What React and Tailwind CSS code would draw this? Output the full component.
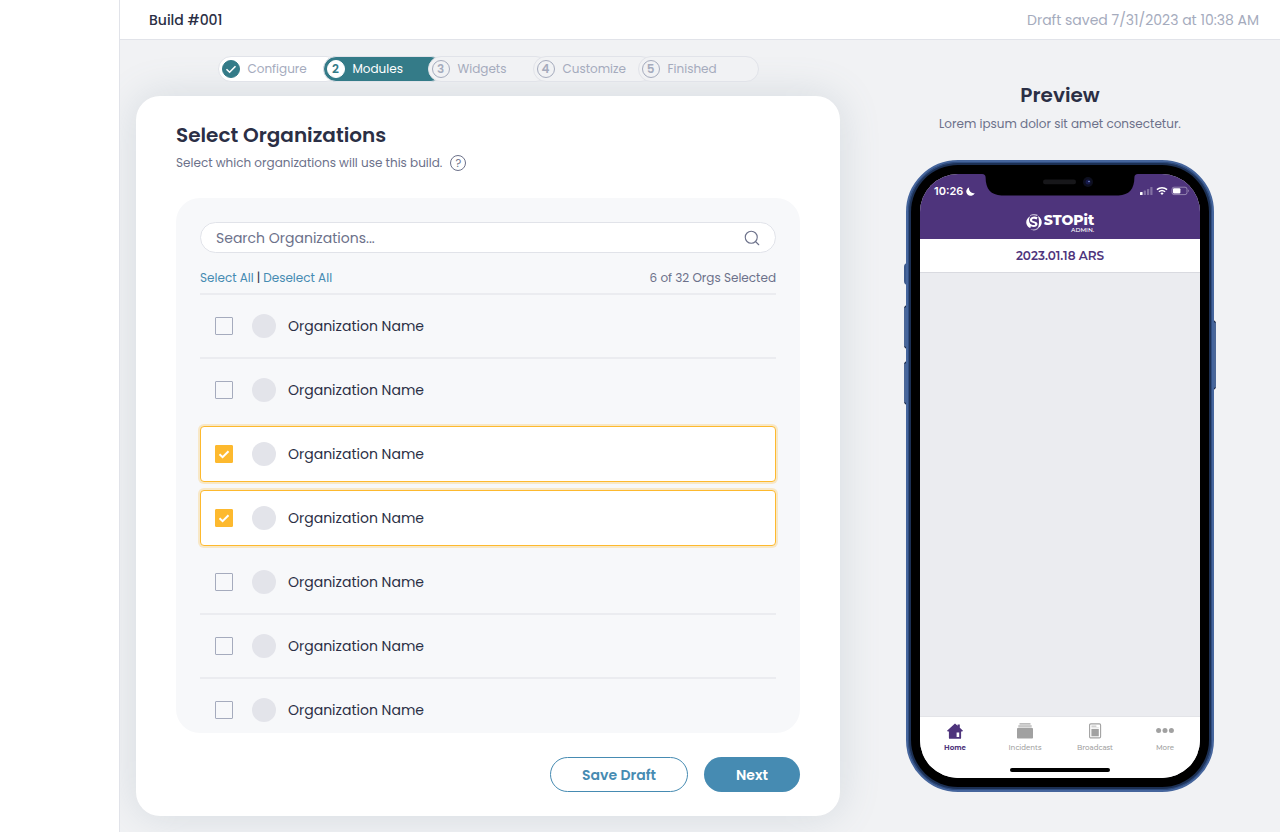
import React, { useState } from 'react';
import { Search } from 'lucide-react';

const steps = [
    { id: 1, label: 'Configure', status: 'done' },
    { id: 2, label: 'Modules', status: 'active' },
    { id: 3, label: 'Widgets', status: 'todo' },
    { id: 4, label: 'Customize', status: 'todo' },
    { id: 5, label: 'Finished', status: 'todo' },
];

const PAGE_SIZE = 7;
const organizations = Array.from({ length: 32 }, (_, i) => ({ id: i + 1, name: 'Organization Name' }));

function CheckMark({ className }) {
    return (
        <svg viewBox="0 0 12 12" fill="none" stroke="currentColor" className={className} aria-hidden="true">
            <path d="M1.5 6.2 4.6 9.2 10.5 3.2" />
        </svg>
    );
}

const stepStyles = {
    done: {
        pill: 'border-[#e1e3e9] bg-white text-[#a5abbd]',
        badge: 'border-[#347b88] bg-[#347b88] text-white',
    },
    active: {
        pill: 'border-[#e1e3e9] bg-[#347b88] text-white',
        badge: 'border-white bg-white text-[#347b88]',
    },
    todo: {
        pill: 'border-[#e1e3e9] bg-[#f1f2f4] text-[#a5abbd]',
        badge: 'border-[#a5abbd] text-[#a5abbd]',
    },
};

function Stepper() {
    return (
        <ol className="flex justify-center pl-4">
            {steps.map((step) => {
                const styles = stepStyles[step.status];
                return (
                    <li
                        key={step.id}
                        className={`relative -ml-4 flex h-[26px] w-[121px] items-center gap-2 rounded-full border pl-[3px] text-xs ${styles.pill}`}
                    >
                        <span className={`flex h-[18px] w-[18px] items-center justify-center rounded-full border text-xs font-semibold ${styles.badge}`}>
                            {step.status === 'done' ? <CheckMark className="h-3 w-3 shrink-0 stroke-[1.6]" /> : step.id}
                        </span>
                        {step.label}
                    </li>
                );
            })}
        </ol>
    );
}

function OrganizationRow({ org, checked, nextChecked, onToggle }) {
    return (
        <li className={`flex h-16 items-center border-b-2 ${checked || nextChecked ? 'border-transparent' : 'border-[#ebecf0]'}`}>
            <label
                className={`flex h-14 w-full items-center rounded border px-3.5 ${
                    checked ? 'border-[#fdb92e] bg-white ring-2 ring-[#fdb92e]/25' : 'border-transparent'
                }`}
            >
                <span className="grid place-items-center">
                    <input
                        type="checkbox"
                        checked={checked}
                        onChange={() => onToggle(org.id)}
                        className="col-start-1 row-start-1 h-[18px] w-[18px] appearance-none rounded-[1px] border border-[#a5abbd] checked:border-[#fdb92e] checked:bg-[#fdb92e]"
                    />
                    {checked && (
                        <CheckMark className="pointer-events-none col-start-1 row-start-1 h-3 w-3 stroke-2 text-white" />
                    )}
                </span>
                <span className="ml-[19px] h-6 w-6 rounded-full bg-[#e3e4ea]" />
                <span className="ml-3 text-sm text-[#2b2f45]">{org.name}</span>
            </label>
        </li>
    );
}

function OrganizationPicker() {
    const [selected, setSelected] = useState([3, 4, 10, 11, 15, 20]);

    const toggle = (id) => {
        setSelected((prev) => (prev.includes(id) ? prev.filter((x) => x !== id) : [...prev, id]));
    };

    return (
        <div className="mt-[26px] flex min-h-0 flex-1 flex-col overflow-hidden rounded-3xl bg-[#f7f8fa] px-6 pt-6">
            <div className="flex h-[31px] shrink-0 items-center rounded-full border border-[#e1e3e9] bg-white pr-3.5 pl-[15px]">
                <input
                    type="text"
                    aria-label="Search Organizations"
                    placeholder="Search Organizations..."
                    className="min-w-0 flex-1 bg-transparent text-sm text-[#2b2f45] outline-none placeholder:text-[#6c718a]"
                />
                <Search className="h-[18px] w-[18px] text-[#6c718a]" strokeWidth={1.5} />
            </div>

            <div className="mt-[15px] flex items-center justify-between border-b-2 border-[#ebecf0] pb-[5px] text-xs leading-5 text-[#6c718a]">
                <div className="flex gap-[3px]">
                    <button type="button" className="text-[#468bb2]" onClick={() => setSelected(organizations.map((o) => o.id))}>
                        Select All
                    </button>
                    <span className="text-[#2b2f45]">|</span>
                    <button type="button" className="text-[#468bb2]" onClick={() => setSelected([])}>
                        Deselect All
                    </button>
                </div>
                <span>
                    {selected.length} of {organizations.length} Orgs Selected
                </span>
            </div>

            <ul className="-mx-1 min-h-0 flex-1 overflow-y-auto px-1 [scrollbar-width:none]">
                {organizations.slice(0, PAGE_SIZE).map((org) => (
                    <OrganizationRow
                        key={org.id}
                        org={org}
                        checked={selected.includes(org.id)}
                        nextChecked={selected.includes(org.id + 1)}
                        onToggle={toggle}
                    />
                ))}
            </ul>
        </div>
    );
}

function StatusIcons() {
    return (
        <svg width="50" height="10" viewBox="0 0 50 10" aria-hidden="true">
            <g fill="#fff">
                <rect x="0" y="6" width="2.6" height="3" rx="0.6" />
                <rect x="3.7" y="4.5" width="2.2" height="4.5" rx="0.6" opacity="0.3" />
                <rect x="7" y="3" width="2.2" height="6" rx="0.6" opacity="0.3" />
                <rect x="10.3" y="1" width="2.2" height="8" rx="0.6" opacity="0.3" />
            </g>
            <g fill="none" stroke="#fff" strokeWidth="1.5">
                <path d="M16.9 3.6a7.8 7.8 0 0 1 10.2 0" />
                <path d="M18.900 5.8a4.800 4.800 0 0 1 6.2 0" />
            </g>
            <path d="M20.400 7.3a2.4 2.4 0 0 1 3.2 0L22 9Z" fill="#fff" />
            <rect x="32" y="1.2" width="15" height="7.4" rx="2" fill="none" stroke="#fff" opacity="0.4" />
            <rect x="33" y="2.2" width="7.4" height="5.4" rx="1" fill="#fff" />
            <path d="M48.2 3.6v2.6c.9-.4.9-2.2 0-2.6Z" fill="#fff" opacity="0.5" />
        </svg>
    );
}

function Swirl() {
    return (
        <svg width="16" height="18" viewBox="0 0 16 18" fill="#fff" aria-hidden="true">
            <path d="M4 2.2C6 .8 9.800.4 12 2L10.8 3.2C9 2.1 6 2 4 3.2Z" opacity="0.6" />
            <path d="M4.200 3.200C.9 4.800-.3 8.200.5 11 1 12.900 2.400 14.400 4.400 15L4.800 13.200C8 14.800 11.400 13.600 11.500 11.200 11.600 9.500 10 8.800 7.900 8.200 6.500 7.800 5.900 7.400 6.100 6.800 6.400 5.700 8.700 5.500 10.500 6.500L11.700 4.400C8.600 2.800 4.700 3.700 4 6.200 3.400 8.600 5.300 9.500 7.500 10.100 8.800 10.500 9.300 10.800 9.100 11.400 8.700 12.400 6 12.300 4.200 10.800 2.600 8.500 2.700 5.600 4.200 3.200Z" />
            <path d="M12 2.900C15.400 5 16.300 8.500 15.400 11.300 14.800 13.200 13.600 14.500 11.600 15.300 13 12.800 13.700 7.600 12 2.900Z" />
            <path d="M4.500 16C6.900 17 10.100 16.300 12 14.200L12.500 15.500C10.400 17.900 6.800 18.200 4.500 16Z" opacity="0.6" />
        </svg>
    );
}

function HomeIcon() {
    return (
        <svg width="16" height="16" viewBox="0 0 16 16" aria-hidden="true">
            <path fill="currentColor" d="M8 .4 10.600 2.800V1.600h2.200v3.200L16 7.700l-.8.900h-1.100v6.300c0 .6-.3.900-.9.900H2.800c-.6 0-.9-.3-.9-.9V8.600H.8L0 7.700Z" />
            <path fill="#fff" d="M9.600 9.600h2.600v4.500H9.600Z" />
        </svg>
    );
}

function IncidentsIcon() {
    return (
        <svg width="16" height="16" viewBox="0 0 16 16" fill="currentColor" aria-hidden="true">
            <rect x="2.500" y="0.300" width="11" height="1.200" />
            <rect x="1.300" y="2.100" width="13.400" height="2.500" opacity="0.6" />
            <rect x="0" y="5" width="16" height="10.600" rx="0.800" />
        </svg>
    );
}

function BroadcastIcon() {
    return (
        <svg width="16" height="16" viewBox="0 0 16 16" fill="currentColor" aria-hidden="true">
            <rect x="2.600" y="0.900" width="11" height="14" rx="1.200" fill="none" stroke="currentColor" strokeWidth="1.100" />
            <rect x="4.400" y="2.600" width="5" height="1.100" opacity="0.7" />
            <rect x="4.400" y="5.900" width="7.400" height="7.400" />
            <rect x="4.400" y="4.400" width="7.400" height="0.600" opacity="0.4" />
        </svg>
    );
}

function MoreIcon() {
    return (
        <svg width="18" height="16" viewBox="0 0 18 16" fill="currentColor" aria-hidden="true">
            <circle cx="2.600" cy="7.600" r="2.500" />
            <circle cx="9" cy="7.600" r="2.500" />
            <circle cx="15.400" cy="7.600" r="2.500" />
        </svg>
    );
}

const tabs = [
    { label: 'Home', icon: HomeIcon, active: true },
    { label: 'Incidents', icon: IncidentsIcon },
    { label: 'Broadcast', icon: BroadcastIcon },
    { label: 'More', icon: MoreIcon },
];

function Notch() {
    return (
        <svg width="156" height="22" viewBox="0 0 156 22" className="absolute top-0 left-1/2 -translate-x-1/2" aria-hidden="true">
            <path d="M0 0C2.500 0 3.600 1.200 3.600 3.600 3.600 15 9 21.400 19.500 21.400H136.500C147 21.400 152.400 15 152.400 3.600 152.400 1.200 153.500 0 156 0Z" />
            <rect x="61" y="5.600" width="33" height="4.600" rx="2.300" fill="#17171a" />
            <circle cx="106" cy="8" r="5" fill="#0d0f1f" />
            <circle cx="106" cy="8" r="2.500" fill="#15194a" />
            <circle cx="107" cy="7.500" r="0.800" fill="#7f93d8" />
        </svg>
    );
}

function Phone() {
    return (
        <div className="relative mt-[27px] w-[308px]">
            {/* side buttons */}
            <span className="absolute top-[103px] -left-[2px] h-[22px] w-[4px] rounded-l-sm bg-[#3d5a8c]" />
            <span className="absolute top-[145px] -left-[2px] h-[44px] w-[4px] rounded-l-sm border-y-2 border-[#1b2a4a] bg-[#4b6797]" />
            <span className="absolute top-[201px] -left-[2px] h-[44px] w-[4px] rounded-l-sm border-y-2 border-[#1b2a4a] bg-[#4b6797]" />
            <span className="absolute top-[160px] -right-[2px] h-[70px] w-[4px] rounded-r-sm border-y-2 border-[#1b2a4a] bg-[#4b6797]" />

            <div className="relative h-[632px] rounded-[52px] border-2 border-[#45659c] bg-[#1c3054] p-[3px] shadow-[inset_0_0_0_1px_#2f4d80]">
                <div className="h-full rounded-[47px] bg-black p-[9px]">
                    <div className="relative flex h-full flex-col overflow-hidden rounded-[38px] bg-[#ebecf0] font-['Inter',sans-serif]">
                        <div className="h-[65px] bg-[#4e347c] text-white">
                            <div className="flex items-center justify-between pt-[9px] pr-[10px] pl-[14px]">
                                <span className="flex items-center gap-[3px] text-[11px] leading-4 font-semibold">
                                    10:26
                                    <svg width="9" height="9" viewBox="0 0 10 10" fill="currentColor" aria-hidden="true">
                                        <path d="M3.600.3A4.900 4.900 0 1 0 9.800 6.600 5 5 0 0 1 3.600.3Z" />
                                    </svg>
                                </span>
                                <StatusIcons />
                            </div>
                            <div className="mt-[14px] flex justify-center gap-[2px]">
                                <Swirl />
                                <div className="flex flex-col items-end font-['Montserrat','Inter',sans-serif]">
                                    <span className="text-sm leading-[14px] font-extrabold">STOPit</span>
                                    <span className="text-[6px] leading-[7px] font-medium">ADMIN.</span>
                                </div>
                            </div>
                        </div>
                        <div className="flex h-[34px] items-center justify-center border-b border-[#d9dae0] bg-white font-['Montserrat','Inter',sans-serif] text-xs font-semibold text-[#4e347c]">
                            2023.01.18 ARS
                        </div>
                        <div className="flex-1" />
                        <nav className="border-t border-[#e3e4e8] bg-white">
                            <div className="flex pt-[6px]">
                                {tabs.map(({ label, icon: Icon, active }) => (
                                    <a
                                        key={label}
                                        href="#"
                                        className={`flex flex-1 flex-col items-center gap-1 font-['Montserrat','Inter',sans-serif] text-[7px] leading-[9px] ${
                                            active ? 'font-bold text-[#4e347c]' : 'font-medium text-[#a1a1a1]'
                                        }`}
                                    >
                                        <Icon />
                                        {label}
                                    </a>
                                ))}
                            </div>
                            <div className="mx-auto mt-4 mb-[6px] h-1 w-[100px] rounded-full bg-black" />
                        </nav>
                        <Notch />
                    </div>
                </div>
            </div>
        </div>
    );
}

export default function App() {
    return (
        <div className="flex h-screen bg-[#f1f2f4] font-['Poppins','Inter',sans-serif] text-[#2b2f45]">
            <aside className="relative z-10 w-[120px] shrink-0 border-r border-[#e1e3e9] bg-white" />

            <div className="flex min-w-0 flex-1 flex-col">
                <header className="relative z-10 flex h-10 shrink-0 items-center justify-between border-b border-[#e1e3e9] bg-white pr-[21px] pl-[29px] text-sm">
                    <span className="font-medium">Build #001</span>
                    <span className="text-[#a5abbd]">Draft saved 7/31/2023 at 10:38 AM</span>
                </header>

                <main className="flex min-h-0 flex-1">
                    <section className="flex min-w-0 flex-1 flex-col pt-4 pb-4 pl-4">
                        <Stepper />

                        <div className="mt-[14px] flex min-h-0 flex-1 flex-col rounded-3xl bg-white px-10 py-6 shadow-[0_0_40px_rgba(100,125,145,0.2)]">
                            <h1 className="text-xl leading-[30px] font-semibold">Select Organizations</h1>
                            <p className="mt-1 flex items-center gap-2 text-xs leading-[18px] text-[#6c718a]">
                                Select which organizations will use this build.
                                <button
                                    type="button"
                                    aria-label="Help"
                                    className="flex h-4 w-4 items-center justify-center rounded-full border border-[#6c718a] text-[11px] leading-none"
                                >
                                    ?
                                </button>
                            </p>

                            <OrganizationPicker />

                            <div className="mt-6 flex justify-end gap-4 text-sm font-semibold">
                                <button type="button" className="h-[35px] w-[138px] rounded-full border border-[#468bb2] text-[#468bb2]">
                                    Save Draft
                                </button>
                                <button type="button" className="h-[35px] w-24 rounded-full bg-[#468bb2] text-white">
                                    Next
                                </button>
                            </div>
                        </div>
                    </section>

                    <section className="flex w-[440px] shrink-0 flex-col items-center pt-10">
                        <h2 className="text-xl leading-[30px] font-semibold">Preview</h2>
                        <p className="mt-[5px] text-xs leading-[18px] text-[#6c718a]">Lorem ipsum dolor sit amet consectetur.</p>
                        <Phone />
                    </section>
                </main>
            </div>
        </div>
    );
}
